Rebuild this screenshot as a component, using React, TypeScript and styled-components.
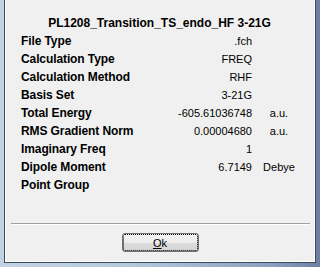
import * as React from 'react';
import styled, { createGlobalStyle } from 'styled-components';

const GlobalStyle = createGlobalStyle`
	html, body {
		margin: 0;
		padding: 0;
		background: #f0f0f0;
	}
`;

interface InfoRow {
	label: string;
	value: string;
	unit?: string;
}

const rows: InfoRow[] = [
	{ label: 'File Type', value: '.fch' },
	{ label: 'Calculation Type', value: 'FREQ' },
	{ label: 'Calculation Method', value: 'RHF' },
	{ label: 'Basis Set', value: '3-21G' },
	{ label: 'Total Energy', value: '-605.61036748', unit: 'a.u.' },
	{ label: 'RMS Gradient Norm', value: '0.00004680', unit: 'a.u.' },
	{ label: 'Imaginary Freq', value: '1' },
	{ label: 'Dipole Moment', value: '6.7149', unit: 'Debye' },
	{ label: 'Point Group', value: '' },
];

const Window = styled.div`
	width: 320px;
	height: 267px;
	box-sizing: border-box;
	padding: 0 4px 4px 4px;
	display: flex;
	background: linear-gradient(90deg, #c3d3e3 0%, #b5c9de 40%, #8c9fbf 85%, #6d7fa3 100%);
	font-family: 'Liberation Sans', Arial, sans-serif;
	font-size: 11px;
	color: #000;
`;

const Client = styled.div`
	flex: 1;
	display: flex;
	flex-direction: column;
	background: #f0f0f0;
	border: 1px solid #3d4a5e;
	border-top: none;
	box-shadow: inset -1px -1px 0 #ffffff, inset 1px 0 0 #ffffff;
	padding-top: 14px;
`;

const Title = styled.div`
	height: 18px;
	line-height: 18px;
	text-align: center;
	font-weight: bold;
	font-size: 12px;
	padding-right: 1px;
`;

const Grid = styled.div`
	display: grid;
	grid-template-columns: 149px 78px 46px;
	column-gap: 4px;
	padding-left: 16px;
	grid-auto-rows: 18px;
	line-height: 18px;
`;

const Label = styled.div`
	font-weight: bold;
	font-size: 12px;
	letter-spacing: -0.1px;
	white-space: nowrap;
`;

const Value = styled.div`
	text-align: right;
	white-space: nowrap;
`;

const Unit = styled.div`
	text-align: center;
	white-space: nowrap;
`;

const Footer = styled.div`
	margin-top: auto;
	display: flex;
	flex-direction: column;
	align-items: center;
	padding-bottom: 10px;
`;

const Separator = styled.div`
	align-self: stretch;
	margin: 0 5px 0 6px;
	border-top: 1px solid #a0a0a0;
	border-bottom: 1px solid #ffffff;
`;

const OkButton = styled.button`
	margin-top: 8px;
	width: 77px;
	height: 19px;
	padding: 0;
	font-family: inherit;
	font-size: 11px;
	color: #000;
	border: 1px solid #707070;
	border-radius: 3px;
	background: linear-gradient(180deg, #f4f4f4 0%, #ececec 50%, #dedede 51%, #d3d3d3 100%);
	display: flex;
	align-items: center;
	justify-content: center;
	box-sizing: border-box;
`;

const FocusRect = styled.span`
	display: flex;
	align-items: center;
	justify-content: center;
	width: 100%;
	height: 100%;
	box-sizing: border-box;
	border: 1px dotted #000;
	border-radius: 2px;
`;

const Accel = styled.span`
	text-decoration: underline;
`;

export default function App() {
	return (
		<>
			<GlobalStyle />
			<Window>
				<Client>
					<Title>PL1208_Transition_TS_endo_HF 3-21G</Title>
					<Grid>
						{rows.map((row) => (
							<React.Fragment key={row.label}>
								<Label>{row.label}</Label>
								<Value>{row.value}</Value>
								<Unit>{row.unit ?? ''}</Unit>
							</React.Fragment>
						))}
					</Grid>
					<Footer>
						<Separator />
						<OkButton>
							<FocusRect>
								<span>
									<Accel>O</Accel>k
								</span>
							</FocusRect>
						</OkButton>
					</Footer>
				</Client>
			</Window>
		</>
	);
}
